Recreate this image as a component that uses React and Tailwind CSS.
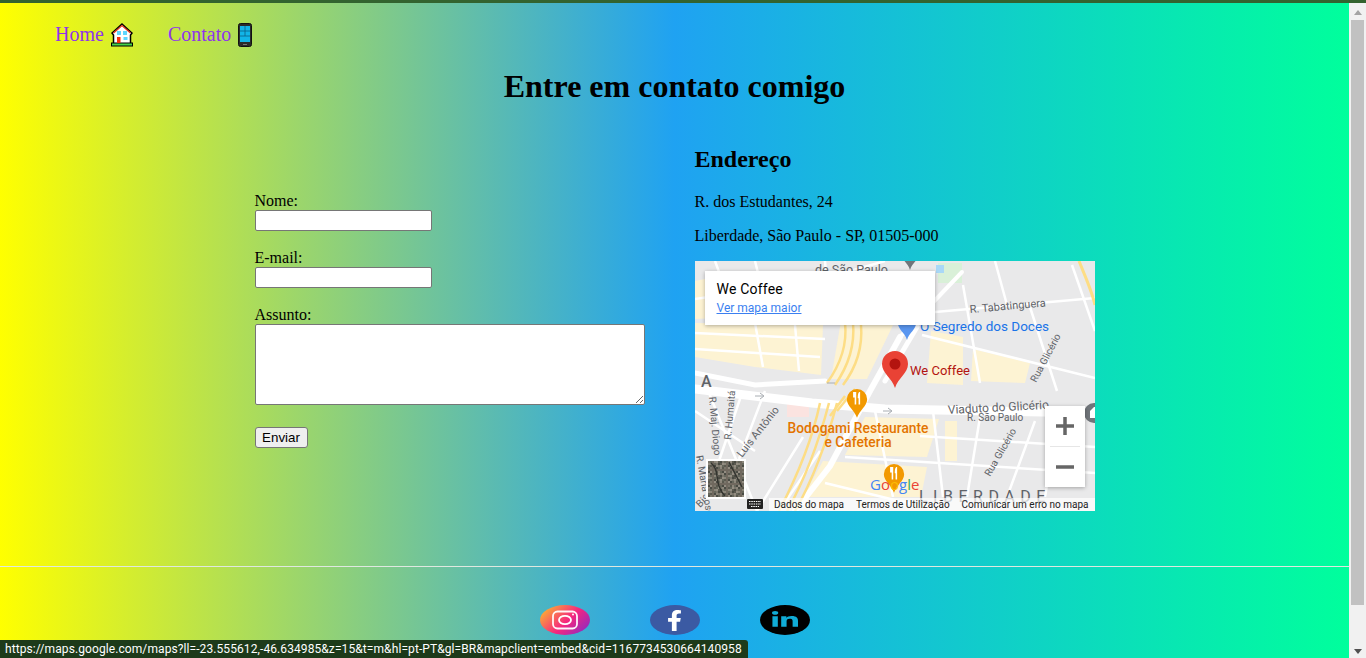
import { FaFacebookF, FaLinkedinIn } from 'react-icons/fa';

const serif = { fontFamily: '"Liberation Serif", serif' };

function HouseEmoji() {
  return (
    <svg width="22" height="24" viewBox="0 0 22 24" className="inline-block">
      <path d="M11 1 L21 10 L19.500 12 V21 H2.500 V12 L1 10 Z" fill="#fff" stroke="#000" strokeWidth="1.500" />
      <path d="M2.500 10 L11 2.500 L19.500 10" fill="none" stroke="#e0341b" strokeWidth="1.300" />
      <rect x="0.500" y="20" width="21" height="3" fill="#45d24a" stroke="#000" strokeWidth="1" />
      <rect x="6" y="14" width="3.500" height="6" fill="#f4300f" />
      <rect x="6" y="8" width="4" height="4" fill="#5fd6ff" />
      <rect x="12" y="8" width="4" height="4" fill="#5fd6ff" />
      <rect x="12.500" y="14" width="4" height="3" fill="#5fd6ff" />
    </svg>
  );
}

function PhoneEmoji() {
  return (
    <svg width="14" height="24" viewBox="0 0 14 24" className="inline-block">
      <rect x="0.500" y="0.500" width="13" height="23" rx="2" fill="#2b2b2b" stroke="#111" />
      <rect x="2" y="3" width="10" height="16" fill="#12b5e8" />
      <path d="M2 8 H12 M2 13 H12 M7 3 V13" stroke="#0b5f86" strokeWidth="0.800" />
      <rect x="5" y="21" width="4" height="1" fill="#777" />
    </svg>
  );
}

function MapPin({ x, y, scale = 1, fill, children }) {
  return (
    <g transform={`translate(${x} ${y}) scale(${scale})`}>
      <path d="M0 37 C-3 27 -13 22 -13 13 A13 13 0 1 1 13 13 C13 22 3 27 0 37 Z" fill={fill} />
      {children}
    </g>
  );
}

function Fork() {
  return <path d="M-5 5 V12 H-3 V21 H-1 V5 Z M3 5 C1 6 1 11 1 13 H2 V21 H4 V5 Z" fill="#fff" transform="translate(0 -1)" />;
}

// blocos do thumbnail de satelite
const satColors = ['#7a766b', '#5b5a50', '#8b867a', '#66675c', '#4a4b44', '#938d82', '#70695f'];
const satCells = [];
for (let r = 0; r < 18; r++) {
  for (let c = 0; c < 18; c++) {
    satCells.push({ x: 13 + c * 2, y: 200 + r * 2, fill: satColors[(r * 5 + c * 3 + r * c) % 7] });
  }
}

function MapDrawing() {
  return (
    <svg width="400" height="250" viewBox="0 0 400 250" className="block" style={{ fontFamily: 'Roboto, sans-serif' }}>
      <rect width="400" height="250" fill="#e9e9ea" />
      <g fill="#fdf3d3">
        <path d="M0 62 L128 64 L126 114 L60 106 L0 96 Z" />
        <path d="M146 60 L200 60 L172 118 L136 118 Z" />
        <path d="M236 70 L268 76 L268 124 L232 122 Z" />
        <path d="M278 88 L335 102 L330 122 L276 120 Z" />
        <path d="M170 156 L244 158 L232 196 L150 194 Z" />
        <path d="M128 200 L232 206 L226 236 L108 236 Z" />
        <path d="M0 20 L30 14 L40 56 L0 58 Z" />
        <path d="M250 160 L262 160 L262 200 L250 200 Z" />
      </g>
      <rect x="92" y="140" width="22" height="16" fill="#fbe3e0" />
      <rect x="243" y="2" width="24" height="20" fill="#d9f0d8" />
      <rect x="241" y="4" width="8" height="8" fill="#a9d8f7" />
      <g fill="none" stroke="#fff" strokeWidth="2.500">
        <path d="M0 38 L120 20 L190 0" />
        <path d="M20 0 L42 60 M60 62 L68 106" />
        <path d="M0 72 L130 78 M0 88 L125 96" />
        <path d="M60 0 L75 60 M100 64 L104 110" />
        <path d="M130 0 L135 60" />
        <path d="M240 51 L400 37" />
        <path d="M227 74 L400 117" />
        <path d="M377 4 L400 70" />
        <path d="M268 24 L285 122 M335 46 L362 130 M300 0 L312 44" />
        <path d="M225 175 L400 186 M150 196 L400 212" />
        <path d="M0 150 L60 190 M14 132 L62 250 M46 135 L24 200 M70 130 L44 198" />
        <path d="M108 176 L62 250 M125 190 L84 250" />
        <path d="M130 222 L245 250" />
        <path d="M180 150 L198 236 M238 150 L248 236 M285 156 L272 236 M340 160 L312 236" />
        <path d="M364 156 L350 236" />
      </g>
      <g fill="none" stroke="#fff" strokeLinecap="round">
        <path d="M0 128 L117 142 L190 148 L400 152" strokeWidth="9" />
        <path d="M267 11 L205 76" strokeWidth="4" />
        <path d="M205 76 L175 130 L135 205 L100 250" strokeWidth="6" />
        <path d="M222 66 L190 120" strokeWidth="5" />
        <path d="M0 112 L60 124 L130 120" strokeWidth="5" />
      </g>
      <g fill="none" stroke="#fddd85" strokeWidth="2.500">
        <path d="M150 62 C152 80 148 100 132 122" />
        <path d="M158 62 C160 84 154 104 140 124" />
        <path d="M166 64 C168 88 160 108 148 124" />
        <path d="M134 142 C124 180 112 215 92 250" />
        <path d="M142 142 C132 180 120 215 100 250" />
        <path d="M125 142 C118 175 105 210 84 250" />
        <path d="M150 135 L135 155 M160 128 L142 150" />
        <path d="M384 0 C390 15 397 30 400 44" strokeWidth="3" />
      </g>

      <path d="M60 135 L68 135 M65 132 L69 135 L65 138 M132 122 L140 122" stroke="#a8adb2" fill="none" />
      <path d="M188 150 L196 150 M193 147 L197 150 L193 153" stroke="#a8adb2" fill="none" />

      <MapPin x={215} y={-17} scale={0.7} fill="#70757a" />
      <MapPin x={212} y={53} scale={0.7} fill="#5a96f0" />
      <MapPin x={200} y={90} fill="#e94235">
        <circle cx="0" cy="13" r="5.500" fill="#b3140f" />
      </MapPin>
      <MapPin x={162} y={128} scale={0.78} fill="#f29900">
        <Fork />
      </MapPin>
      <MapPin x={199} y={203} scale={0.78} fill="#f29900">
        <Fork />
      </MapPin>
      <circle cx="399" cy="152" r="10" fill="#70757a" />
      <path d="M399 146 L395 150 V157 H400 V146 Z" fill="#fff" />

      <text x="120" y="13" fontSize="12.500" fill="#5f6368">de São Paulo</text>
      <g fill="#5f6368" fontSize="11">
        <text x="275" y="52" transform="rotate(-5 275 52)">R. Tabatinguera</text>
        <text x="341" y="122" fontSize="10" transform="rotate(-62 341 122)">Rua Glicério</text>
        <text x="253" y="153" fontSize="12" transform="rotate(-3 253 153)">Viaduto do Glicério</text>
        <text x="272" y="160" fontSize="10">R. São Paulo</text>
        <text x="295" y="216" fontSize="10" transform="rotate(-60 295 216)">Rua Glicério</text>
        <text x="14" y="136" fontSize="10" transform="rotate(85 14 136)">R. Maj. Diogo</text>
        <text x="36" y="179" fontSize="10" transform="rotate(-85 36 179)">R. Humaitá</text>
        <text x="47" y="197" transform="rotate(-52 47 197)">Luís Antônio</text>
        <text x="1" y="195" fontSize="10" transform="rotate(80 1 195)">R. Maria José</text>
        <text x="6" y="126" fontSize="16" fontWeight="500">A</text>
        <text x="224" y="241" fontSize="16" letterSpacing="5.500">LIBERDADE</text>
        <text x="5" y="247" fontSize="10" transform="rotate(-45 5 247)">Bi</text>
      </g>
      <text x="225" y="70" fontSize="13.500" fill="#1a73e8">O Segredo dos Doces</text>
      <text x="215" y="114" fontSize="13" fill="#b3140f">We Coffee</text>
      <g fontSize="13.800" fill="#e37400" fontWeight="500" textAnchor="middle">
        <text x="163" y="172">Bodogami Restaurante</text>
        <text x="163" y="186">e Cafeteria</text>
      </g>

      <text x="175" y="229" fontSize="15" fontWeight="500" fontFamily='"Open Sans", sans-serif'>
        <tspan fill="#4285f4">G</tspan>
        <tspan fill="#ea4335">o</tspan>
        <tspan fill="#fbbc05">o</tspan>
        <tspan fill="#4285f4">g</tspan>
        <tspan fill="#34a853">l</tspan>
        <tspan fill="#ea4335">e</tspan>
      </text>

      <rect x="11" y="198" width="40" height="40" fill="#fff" />
      {satCells.map((c, i) => (
        <rect key={i} x={c.x} y={c.y} width="2" height="2" fill={c.fill} />
      ))}
      <path d="M16 202 C26 210 18 222 30 235 M34 201 L47 226" stroke="#33342f" strokeWidth="1.500" fill="none" />

      <rect x="52" y="238" width="16" height="10" rx="1" fill="#222" />
      <path d="M54 240.500 H66 M54 243 H66 M56 245.500 H64" stroke="#fff" strokeWidth="1" strokeDasharray="1.500 0.800" />
    </svg>
  );
}

function InstagramIcon() {
  return (
    <svg width="50" height="30" viewBox="0 0 50 30" className="block">
      <defs>
        <linearGradient id="ig" x1="0" y1="0.200" x2="1" y2="0.800">
          <stop offset="0" stopColor="#fdb52f" />
          <stop offset="0.550" stopColor="#f5267f" />
          <stop offset="1" stopColor="#8d2bc2" />
        </linearGradient>
      </defs>
      <ellipse cx="25" cy="15" rx="25" ry="15" fill="url(#ig)" />
      <rect x="13" y="6.500" width="24" height="17" rx="4.500" fill="none" stroke="#fff" strokeWidth="1.800" opacity="0.950" />
      <ellipse cx="25" cy="15" rx="6" ry="4.200" fill="none" stroke="#fff" strokeWidth="1.800" />
      <circle cx="33" cy="9.500" r="1" fill="#fff" />
    </svg>
  );
}

export default function App() {
  return (
    <div className="h-[658px] w-[1366px] overflow-hidden flex flex-col relative text-black" style={serif}>
      <div className="h-[3px] shrink-0 bg-[#33632f]" />
      <div className="flex flex-1 min-h-0">
        <div className="w-[1349px] flex flex-col bg-linear-to-r/srgb from-[#ffff00] via-[#1fa2f2] to-[#00ff9c]">
          <nav className="flex gap-[35px] pl-[55px] pt-[20px] h-[47px] text-[20px] text-[#8f35ea]">
            <a className="flex items-start gap-[7px] leading-[23px]">
              Home <HouseEmoji />
            </a>
            <a className="flex items-start gap-[7px] leading-[23px]">
              Contato <PhoneEmoji />
            </a>
          </nav>

          <h1 className="text-[32px] leading-[37px] font-bold text-center mt-[18px]">Entre em contato comigo</h1>

          <div className="flex justify-center gap-[50px] mt-[41px]">
            <form className="w-[390px] flex flex-col items-start pt-[46px] text-[16px] leading-[18px]">
              <label>Nome:</label>
              <input className="w-[177px] h-[21px] bg-white border border-[#767676] rounded-[2px]" />
              <label className="mt-[18px]">E-mail:</label>
              <input className="w-[177px] h-[21px] bg-white border border-[#767676] rounded-[2px]" />
              <label className="mt-[18px]">Assunto:</label>
              <textarea className="w-[390px] h-[81px] bg-white border border-[#767676] rounded-[2px] resize" />
              <button
                type="button"
                className="mt-[22px] w-[53px] h-[21px] bg-[#efefef] border border-[#767676] rounded-[3px] text-[13.33px] leading-[15px] font-['Liberation_Sans',sans-serif]"
              >
                Enviar
              </button>
            </form>

            <div className="w-[400px]">
              <h2 className="text-[24px] leading-[28px] font-bold h-[28px] -mt-[1px]">Endereço</h2>
              <p className="text-[16px] leading-[18px] mt-[20px]">R. dos Estudantes, 24</p>
              <p className="text-[16px] leading-[18px] mt-[16px]">Liberdade, São Paulo - SP, 01505-000</p>
              <div className="relative w-[400px] h-[250px] mt-[16px] font-['Roboto',sans-serif]">
                <MapDrawing />
                <div className="absolute left-[10px] top-[10px] w-[230px] h-[54px] bg-white shadow-[0_1px_4px_rgba(0,0,0,0.3)] pl-[12px] pt-[10px]">
                  <div className="text-[14px] leading-[16px] font-normal tracking-[0.2px] text-black">We Coffee</div>
                  <a className="block mt-[4px] text-[12px] leading-[14px] text-[#3b7ff0] underline">Ver mapa maior</a>
                </div>
                <div className="absolute right-[10px] top-[145px] w-[40px] h-[81px] bg-white shadow-[0_1px_4px_rgba(0,0,0,0.3)] flex flex-col items-center">
                  <svg width="20" height="40" viewBox="0 0 20 40">
                    <path d="M1 20 H19 M10 11 V29" stroke="#666" strokeWidth="3.500" />
                  </svg>
                  <div className="w-[30px] h-px bg-[#e6e6e6]" />
                  <svg width="20" height="40" viewBox="0 0 20 40">
                    <path d="M1 20 H19" stroke="#666" strokeWidth="3.500" />
                  </svg>
                </div>
                <div className="absolute right-0 bottom-0 w-[326px] h-[13px] bg-white/70 flex justify-end gap-[12px] pr-[6px] text-[10px] leading-[13px] text-[#222]">
                  <span>Dados do mapa</span>
                  <span>Termos de Utilização</span>
                  <span>Comunicar um erro no mapa</span>
                </div>
              </div>
            </div>
          </div>

          <hr className="mt-[55px] border-0 h-px bg-[#dfe8e0]" />

          <div className="flex justify-center gap-[60px] mt-[38px]">
            <a><InstagramIcon /></a>
            <a className="w-[50px] h-[30px] rounded-[50%] bg-[#3b5aa3] flex items-center justify-center text-white">
              <FaFacebookF className="w-[15px] h-[21px]" preserveAspectRatio="none" />
            </a>
            <a className="w-[50px] h-[30px] rounded-[50%] bg-black flex items-center justify-center text-[#10acd6]">
              <FaLinkedinIn className="w-[26px] h-[18px]" preserveAspectRatio="none" />
            </a>
          </div>
        </div>

        <div className="w-[17px] shrink-0 bg-[#f1f1f1] flex flex-col items-center">
          <svg width="8" height="5" viewBox="0 0 8 5" className="mt-[7px]">
            <path d="M4 0 L8 5 H0 Z" fill="#a3a3a3" />
          </svg>
          <div className="w-[13px] h-[585px] mt-[5px] bg-[#c1c1c1]" />
          <svg width="8" height="5" viewBox="0 0 8 5" className="mt-[44px]">
            <path d="M4 5 L8 0 H0 Z" fill="#505050" />
          </svg>
        </div>
      </div>

      <div className="absolute left-0 bottom-0 w-[748px] h-[18px] pl-[5px] bg-[#1d3a1a] rounded-tr-[3px] text-white text-[12px] leading-[18px] tracking-[0.09px] whitespace-nowrap font-['Roboto',sans-serif]">
        https://maps.google.com/maps?ll=-23.555612,-46.634985&z=15&t=m&hl=pt-PT&gl=BR&mapclient=embed&cid=1167734530664140958
      </div>
    </div>
  );
}
